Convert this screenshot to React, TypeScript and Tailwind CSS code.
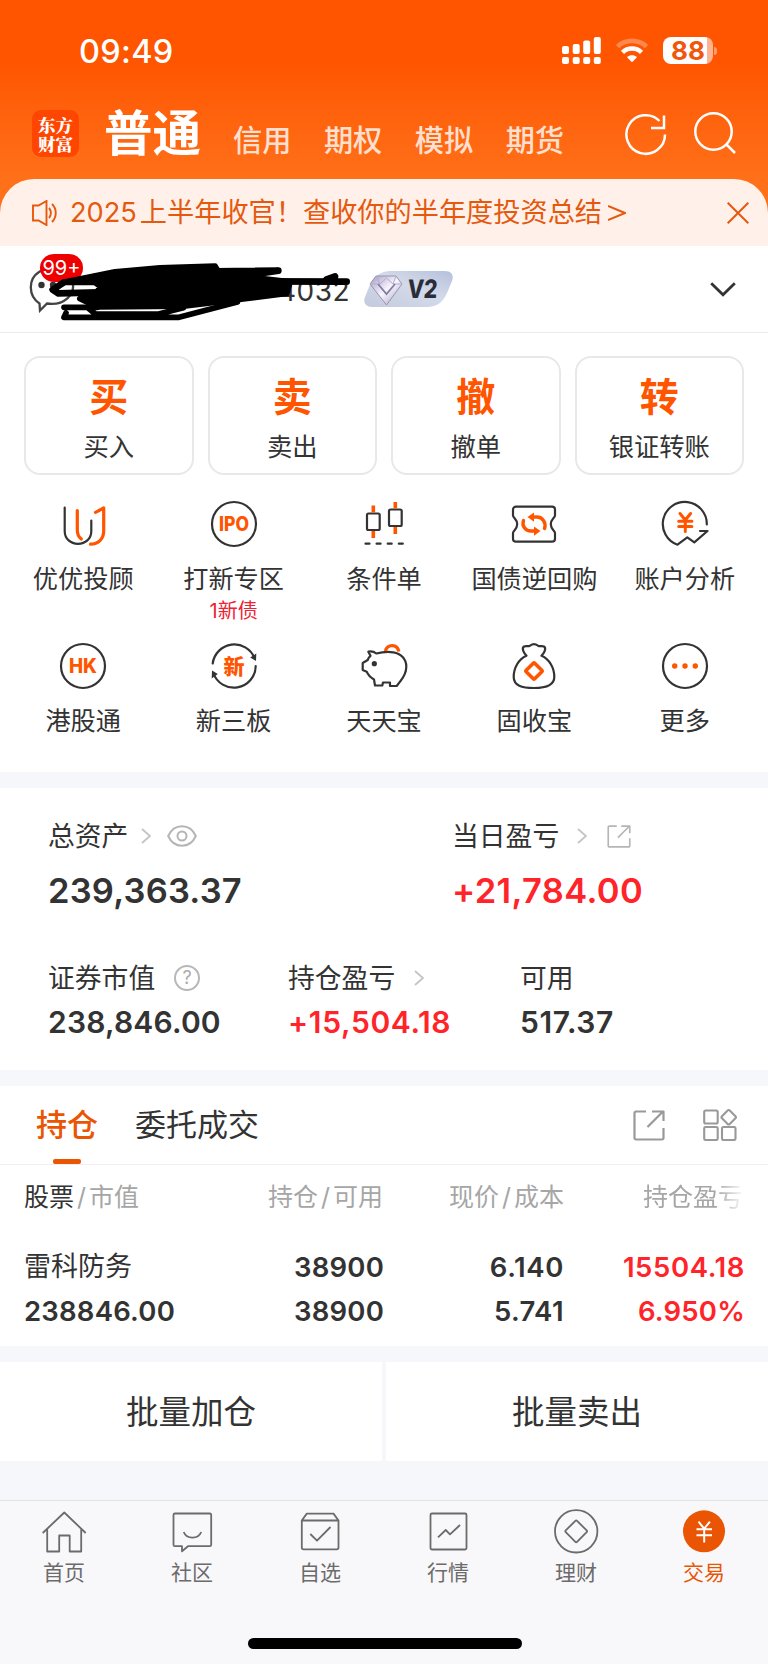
import type { ReactNode } from "react";

const DARK = "#333333";
const ORANGE = "#ff5500";

type Item = { label: string; icon: ReactNode; note?: string };

function Icon48({ children, className = "" }: { children: ReactNode; className?: string }) {
  return (
    <svg
      viewBox="0 0 48 48"
      fill="none"
      stroke={DARK}
      strokeWidth="2.2"
      strokeLinecap="round"
      strokeLinejoin="round"
      className={`h-12 w-12 shrink-0 ${className}`}
    >
      {children}
    </svg>
  );
}

const services: Item[] = [
  {
    label: "优优投顾",
    icon: (
      <Icon48>
        <path d="M5.7 7.5V31c0 8 6 12.8 13.3 12.8S32.3 39 32.3 31V20.5" />
        <g stroke={ORANGE} strokeWidth="3.2">
          <path d="M18.3 10.5V30c0 4.5 1.3 7 4 9" />
          <path d="M36.5 12.3l8.2-4.3V31c0 8-5.5 13-13.2 13.2" />
        </g>
      </Icon48>
    ),
  },
  {
    label: "打新专区",
    note: "1新债",
    icon: (
      <Icon48>
        <circle cx="24" cy="24" r="22" />
        <text x="24" y="31" textAnchor="middle" fontSize="19.5" fontWeight="800" fill={ORANGE} stroke="none" textLength="30" lengthAdjust="spacingAndGlyphs">
          IPO
        </text>
      </Icon48>
    ),
  },
  {
    label: "条件单",
    icon: (
      <Icon48>
        <rect x="7" y="13.5" width="12.7" height="16.5" rx="1.5" />
        <rect x="29" y="9.5" width="12.7" height="16.5" rx="1.5" />
        <path d="M5.5 43.7H44" strokeDasharray="4 7.1" />
        <g stroke={ORANGE} strokeWidth="3.6" strokeLinecap="butt">
          <path d="M13.3 5.5v7M13.3 31v7M35.3 2v6.5M35.3 27v7" />
        </g>
      </Icon48>
    ),
  },
  {
    label: "国债逆回购",
    icon: (
      <Icon48>
        <path d="M6 6.7h36a3 3 0 0 1 3 3v5.8c0 2.2-4.2 3.5-4.2 8.7s4.2 6.5 4.2 8.7v5.8a3 3 0 0 1-3 3H6a3 3 0 0 1-3-3v-5.8c0-2.2 4.2-3.5 4.2-8.7S3 17.7 3 15.5V9.7a3 3 0 0 1 3-3z" />
        <g stroke={ORANGE} strokeWidth="3.4">
          <path d="M13.5 20.5c-2 5.5 2 10.5 7.5 10.5h4" />
          <path d="M34.5 28.5c2-5.5-2-11.5-7.5-11.5h-4" />
        </g>
        <path d="M24 26.5l6.5 4.6-6.5 4.6zM24 12.5l-6.5 4.6 6.5 4.6z" fill={ORANGE} stroke="none" />
      </Icon48>
    ),
  },
  {
    label: "账户分析",
    icon: (
      <Icon48>
        <path d="M45.8 24.5A22 22 0 1 0 16.5 44.7l9.8-7.4 7 5L46.5 31h-7.5" />
        <path d="M19 13.5l5.3 6.5 5.3-6.5M24.3 20v11.5M17.7 21.3h13.2M17.7 26.5h13.2" stroke={ORANGE} strokeWidth="3" />
      </Icon48>
    ),
  },
  {
    label: "港股通",
    icon: (
      <Icon48>
        <circle cx="24" cy="24" r="22" />
        <text x="24" y="31" textAnchor="middle" fontSize="19.5" fontWeight="800" fill={ORANGE} stroke="none" textLength="28" lengthAdjust="spacingAndGlyphs">
          HK
        </text>
      </Icon48>
    ),
  },
  {
    label: "新三板",
    icon: (
      <Icon48>
        <path d="M2.7 21.5A21.8 21.8 0 0 1 44.5 16M45.7 24A21.8 21.8 0 0 1 3.3 31" />
        <path d="M46.3 11.5l-.3 7.5-5.8-3.5zM1.7 36.5L2 28.5l5.8 3.5z" fill={DARK} stroke="none" />
        <text x="24" y="31.5" textAnchor="middle" fontSize="21" fontWeight="800" fill={ORANGE} stroke="none">
          新
        </text>
      </Icon48>
    ),
  },
  {
    label: "天天宝",
    icon: (
      <Icon48>
        <path d="M8.3 9.7c3-.6 6 .2 8 1.8 5-1.3 11-2 17-1.2C41 11.5 46.3 17 46.3 24.7c0 6-3.300 11.3-6.300 15L36.700 44H30v-3.500h-7l-.7 3H15l-1-6C10.5 35.5 8 33 6.7 29.7L2.7 28v-7l5-3c.3-1.7 1.3-3 2.8-4.2z" />
        <circle cx="14.3" cy="21.7" r="2.6" fill={DARK} stroke="none" />
        <path d="M25.5 9c1.5-7.5 12-7 13.3.5" stroke={ORANGE} strokeWidth="3.4" strokeLinecap="butt" />
      </Icon48>
    ),
  },
  {
    label: "固收宝",
    icon: (
      <Icon48>
        <path d="M16.5 13.7c-2.5-2-5.3-7.5-2.5-9.2 2-1 4 .2 6-.8 1.5-1 2.5-1.5 4-1.5s2.5.5 4 1.5c2 1 4-.2 6 .8 2.8 1.7 0 7.2-2.5 9.2C39.5 17 44.3 26 44.3 35c0 8.5-8 11-20.3 11S3.7 43.5 3.7 35c0-9 4.8-18 12.8-21.3z" />
        <rect x="18" y="23" width="12" height="12" rx="1" transform="rotate(45 24 29)" stroke={ORANGE} strokeWidth="3.6" />
      </Icon48>
    ),
  },
  {
    label: "更多",
    icon: (
      <Icon48>
        <circle cx="24" cy="24" r="22" />
        <g fill={ORANGE} stroke="none">
          <circle cx="13.7" cy="24" r="2.7" />
          <circle cx="24" cy="24" r="2.7" />
          <circle cx="34.3" cy="24" r="2.7" />
        </g>
      </Icon48>
    ),
  },
];

const navItems: Item[] = [
  {
    label: "首页",
    icon: <path d="M2.7 25L24.3 4.5 45.7 25M7.2 21.5v22h12v-16h10.5v16h11.5v-22" />,
  },
  {
    label: "社区",
    icon: <path d="M7 5.5h34.7a1.5 1.5 0 0 1 1.5 1.5v29.7a1.5 1.5 0 0 1-1.5 1.5H20L14 43.3v-5.1H7a1.5 1.5 0 0 1-1.5-1.5V7A1.5 1.5 0 0 1 7 5.5zM15.7 24c3 7.500 14.500 7.500 17.500 0" />,
  },
  {
    label: "自选",
    icon: <path d="M5.8 12.5h36.7v27a1.8 1.8 0 0 1-1.8 1.8H7.6a1.8 1.8 0 0 1-1.8-1.8zl5-6.900h26.700l5 6.900M14.300 26l6.700 6.700L34.500 19" />,
  },
  {
    label: "行情",
    icon: <path d="M8 5.5h33a1.5 1.5 0 0 1 1.5 1.5v33a1.5 1.5 0 0 1-1.5 1.5H8A1.5 1.5 0 0 1 6.5 40V7A1.5 1.5 0 0 1 8 5.5zM14 29.3l7.700-7.300 4.300 4.300L36 17" />,
  },
  {
    label: "理财",
    icon: (
      <>
        <circle cx="24.2" cy="23.3" r="21.2" />
        <rect x="16.2" y="15.3" width="16" height="16" rx="1.2" transform="rotate(45 24.2 23.3)" />
      </>
    ),
  },
  {
    label: "交易",
    icon: (
      <>
        <circle cx="24" cy="23.3" r="21" fill="#ea5504" stroke="none" />
        <path d="M18.5 13.7l5.7 7 5.7-7M24.2 21v13.5M16.5 21.3h15.5M16.5 27.3h15.5" stroke="#fff" strokeWidth="2" />
      </>
    ),
  },
];

const trades = [
  ["买", "买入"],
  ["卖", "卖出"],
  ["撤", "撤单"],
  ["转", "银证转账"],
];

function Chevron({ className = "" }: { className?: string }) {
  return (
    <svg viewBox="0 0 10 16" fill="none" stroke="#c4c4c4" strokeWidth="1.8" className={`h-4 w-2.5 ${className}`}>
      <path d="M1 1l8 7-8 7" />
    </svg>
  );
}

function StatusBar() {
  return (
    <div className="flex h-[100px] items-start pt-[33px] pr-[51px] pl-[79px]">
      <span className="pt-px text-[32.5px] leading-9 font-medium tracking-[0.3px]">09:49</span>
      <div className="ml-auto flex pt-1">
        <svg viewBox="0 0 39 27" className="h-[27px] w-[39px]" fill="#fff">
          <rect x="0" y="9" width="7" height="8" rx="2" />
          <rect x="10.7" y="7" width="7" height="10" rx="2" />
          <rect x="21.2" y="3.5" width="7" height="13.5" rx="2" />
          <rect x="31.8" y="0" width="7" height="17" rx="2" />
          <rect x="0" y="20" width="7" height="7" rx="2" />
          <rect x="10.7" y="20" width="7" height="7" rx="2" />
          <rect x="21.2" y="20" width="7" height="7" rx="2" />
          <rect x="31.8" y="20" width="7" height="7" rx="2" />
        </svg>
        <svg viewBox="0 0 32 25" className="ml-[15px] h-[25px] w-8" fill="none" stroke="#fff" strokeWidth="4.6">
          <path d="M1.5 9.5C9.5 2 22.5 2 30.5 9.5" opacity="0.3" />
          <path d="M6.5 15.3c5.3-5 13.7-5 19 0" />
          <path d="M16 25.3l-5-5c2.8-2.6 7.2-2.6 10 0z" fill="#fff" stroke="none" />
        </svg>
        <div className="ml-[15px] flex items-center">
          <div className="flex h-[27px] w-[50px] items-center justify-center rounded-[8px] bg-linear-to-r from-white from-88% to-[#ffb491] to-88% text-[26px] leading-none font-bold text-[#f0570d]">
            88
          </div>
          <div className="ml-px h-2 w-[3px] rounded-r-full bg-[#ff9a6b]" />
        </div>
      </div>
    </div>
  );
}

function Header() {
  return (
    <header className="h-[246px] bg-linear-to-b from-[#ff5500] from-25% to-[#ff7119] to-75% text-white">
      <StatusBar />
      <div className="flex h-[79px] items-start pl-8">
        <div className="mt-[10px] flex h-[47px] w-[47px] items-center justify-center rounded-[9px] bg-[#ff4600] font-['Noto_Serif_CJK_SC','Noto_Sans_CJK_SC',serif] text-[17.5px] leading-[19px] font-black">
          <p className="w-[35px] break-all">东方财富</p>
        </div>
        <h1 className="ml-[25px] text-[48.5px] leading-[68px] font-bold">普通</h1>
        <nav className="mt-[22px] ml-8 flex gap-[32.5px] text-[29.2px] leading-[38px] font-medium text-[#ffe0d0]">
          <span>信用</span>
          <span>期权</span>
          <span>模拟</span>
          <span>期货</span>
        </nav>
        <svg viewBox="0 0 44 44" className="mt-3 ml-[60px] h-11 w-11" fill="none" stroke="#fff" strokeWidth="2.5">
          <path d="M41 22.5A19.3 19.3 0 1 1 35.5 9M40 3.5V16H27" />
        </svg>
        <svg viewBox="0 0 44 44" className="mt-3 ml-[25px] h-11 w-11" fill="none" stroke="#fff" strokeWidth="2.5">
          <circle cx="20.5" cy="19.5" r="18.2" />
          <path d="M33 32l9 9" />
        </svg>
      </div>
      <div className="flex h-[67px] items-center rounded-t-[34px] bg-[#fff1ea] pr-[19px] pl-8 text-[#e5590f]">
        <svg viewBox="0 0 26 26" className="h-[26px] w-[26px]" fill="none" stroke="currentColor" strokeWidth="1.9">
          <path d="M1 5.5h5.5L14.5 1v24l-8-4.5H1zM17 8c2.5 2.5 2.5 7.5 0 10M20 4c5 5 5 13 0 18" />
        </svg>
        <p className="ml-3 text-[27.2px] leading-10 whitespace-nowrap">
          <span className="mr-[3px]">2025</span>上半年收官！查收你的半年度投资总结
        </p>
        <svg viewBox="0 0 18 16" className="ml-1.5 h-4 w-[18px]" fill="none" stroke="currentColor" strokeWidth="2">
          <path d="M0 1l17 7-17 7" />
        </svg>
        <svg viewBox="0 0 22 22" className="ml-auto h-[22px] w-[22px]" fill="none" stroke="currentColor" strokeWidth="2">
          <path d="M.7.7l20.6 20.6M21.3.7L.7 21.3" />
        </svg>
      </div>
    </header>
  );
}

function Account() {
  return (
    <section className="relative flex h-[87px] items-center border-b border-[#ebebed] pr-8 pl-[29px]">
      <svg viewBox="0 0 48 48" className="h-12 w-12" fill="none" stroke="#444" strokeWidth="2.3">
        <path d="M10.5 38.5C-1 31-1 14 10 7 20 0 38 2 43 15c5 15-9 26-25 23.5l-7 7z" />
        <circle cx="12.5" cy="20" r="3.2" fill={DARK} stroke="none" />
        <circle cx="24" cy="20" r="3.2" fill={DARK} stroke="none" />
      </svg>
      <span className="ml-auto pt-1 text-[28px] leading-9 tracking-[0.5px] text-[#333]">4032</span>
      <svg viewBox="0 0 90 36" className="mr-[256px] ml-[14px] h-9 w-[90px]">
        <defs>
          <linearGradient id="plate" x1="0" y1="1" x2="1" y2="0">
            <stop offset="0" stopColor="#c3cade" />
            <stop offset="0.55" stopColor="#d3dae9" />
            <stop offset="1" stopColor="#b6c0db" />
          </linearGradient>
          <linearGradient id="gem" x1="0" y1="0" x2="1" y2="1">
            <stop offset="0" stopColor="#a49cc0" />
            <stop offset="0.5" stopColor="#f8f5ff" />
            <stop offset="1" stopColor="#a09ab8" />
          </linearGradient>
        </defs>
        <path d="M27 0h54c7 0 9 5 7 10l-5 12c-4 9-10 14-20 14H8C1 36-1 31 1 26l4-10C9 6 16 0 27 0z" fill="url(#plate)" />
        <path d="M12 5h20l6 8-15.5 21L6 13z" fill="url(#gem)" stroke="#9a93b4" strokeWidth="1" />
        <path d="M12 5l4 8 6.5-6 6.5 6 3-8M6 13h10M29 13h9" fill="none" stroke="#b4adcb" strokeWidth="1" />
        <path d="M14 13l8.5 10L31 13" fill="none" stroke="#847da6" strokeWidth="1.8" />
        <text x="43" y="27" fontSize="25.5" fontWeight="800" fill="#2b2c3a" textLength="30" lengthAdjust="spacingAndGlyphs" transform="skewX(-4) translate(1.8 0)">
          V2
        </text>
      </svg>
      <svg viewBox="0 0 26 15" className="h-[15px] w-[26px]" fill="none" stroke={DARK} strokeWidth="2.8">
        <path d="M1.2 1.2L13 12.8 24.8 1.2" />
      </svg>
      <span className="absolute top-2 left-10 flex h-7 w-[43px] items-center justify-center rounded-full bg-[#ee0000] text-[20px] leading-none text-white">
        99+
      </span>
      {/* marker strokes over the account number */}
      <svg
        viewBox="0 0 1152 258"
        className="absolute top-0 left-0 h-[86px] w-[384px]"
        fill="none"
        stroke="#000"
        strokeWidth="18"
        strokeLinecap="round"
        strokeLinejoin="round"
      >
        <path d="M190 109L345 78 480 66 645 61 655 78 700 88 870 108 860 142 730 158 700 162 550 180 290 182 240 158 290 145 300 120 285 109z" fill="#000" />
        <path d="M645 76L835 74 700 95 760 106 1040 107M980 100l25-9" strokeWidth="20" />
        <path d="M190 110L158 131 175 142 295 139" strokeWidth="20" />
        <path d="M192 184h100M192 214h345L712 168M192 214l6-13M262 184l24 20h190l74-19" strokeWidth="17" />
      </svg>
    </section>
  );
}

function Services() {
  return (
    <section className="h-[439px] pt-[23px]">
      <div className="grid grid-cols-4 gap-[14px] px-6">
        {trades.map(([mark, name]) => (
          <button key={mark} className="flex h-[119px] flex-col items-center rounded-[16px] border-2 border-[#e8e8ea] pt-3">
            <span className="text-[39px] leading-[54px] font-bold text-[#ff5500]">{mark}</span>
            <span className="mt-[7px] text-[25.3px] leading-8">{name}</span>
          </button>
        ))}
      </div>
      <div className="mt-[25px] grid grid-cols-5 px-2">
        {services.map((item) => (
          <div key={item.label} className="flex h-[142px] flex-col items-center">
            {item.icon}
            <span className="mt-[13px] text-[25.2px] leading-9">{item.label}</span>
            {item.note && <span className="mt-0.5 text-[20px] leading-6 text-[#ee2233]">{item.note}</span>}
          </div>
        ))}
      </div>
    </section>
  );
}

function ShareIcon({ className = "" }: { className?: string }) {
  return (
    <svg viewBox="0 0 32 31" fill="none" stroke="currentColor" strokeWidth="2.2" strokeLinejoin="round" className={className}>
      <path d="M13 1.5H3a1.5 1.5 0 0 0-1.5 1.5v25A1.5 1.5 0 0 0 3 29.5h26a1.5 1.5 0 0 0 1.5-1.5V18M14.5 17L29.5 2M19 1.5h11.5V11" />
    </svg>
  );
}

function Assets() {
  return (
    <section className="mt-4 h-[282px] bg-white pt-7 pl-12">
      <div className="flex">
        <div className="w-[404px]">
          <div className="flex h-10 items-center">
            <span className="text-[26.8px] leading-10">总资产</span>
            <Chevron className="ml-[13px]" />
            <svg viewBox="0 0 30 22" className="ml-4 h-[22px] w-[30px]" fill="none" stroke="#b5b5b5" strokeWidth="2">
              <path d="M1.2 11C7-2 23-2 28.8 11 23 24 7 24 1.2 11z" />
              <circle cx="15" cy="11" r="4.5" />
            </svg>
          </div>
          <p className="mt-[15px] text-[34.5px] leading-10 font-semibold tracking-[0.2px]">239,363.37</p>
        </div>
        <div>
          <div className="flex h-10 items-center">
            <span className="text-[26.8px] leading-10">当日盈亏</span>
            <Chevron className="ml-[18px]" />
            <ShareIcon className="ml-5 h-[23px] w-6 text-[#b5b5b5]" />
          </div>
          <p className="mt-[15px] text-[34.5px] leading-10 font-semibold tracking-[0.35px] text-[#ff2429]">+21,784.00</p>
        </div>
      </div>
      <div className="mt-[47px] flex">
        <div className="w-60">
          <div className="flex h-10 items-center">
            <span className="text-[26.8px] leading-10">证券市值</span>
            <span className="ml-[19px] flex h-[26px] w-[26px] items-center justify-center rounded-full border-2 border-[#b8b8b8] text-[18px] leading-none text-[#aaa]">
              ?
            </span>
          </div>
          <p className="mt-1 text-[30px] leading-10 font-semibold tracking-[0.2px]">238,846.00</p>
        </div>
        <div className="w-[232px]">
          <div className="flex h-10 items-center">
            <span className="text-[26.8px] leading-10">持仓盈亏</span>
            <Chevron className="ml-[19px]" />
          </div>
          <p className="mt-1 text-[30px] leading-10 font-semibold tracking-[0.65px] text-[#ff2429]">+15,504.18</p>
        </div>
        <div>
          <p className="text-[26.8px] leading-10">可用</p>
          <p className="mt-1 text-[30px] leading-10 font-semibold tracking-[0.6px]">517.37</p>
        </div>
      </div>
    </section>
  );
}

function Holdings() {
  return (
    <section className="mt-4 h-[260px] bg-white">
      <div className="flex h-[79px] items-center border-b border-[#efeff1] pr-[31px] pl-9 text-[31px]">
        <div className="relative flex h-full items-center font-medium text-[#ea5504]">
          持仓
          <span className="absolute bottom-0 left-[17px] h-[5px] w-[28px] rounded-[2px] bg-[#ea5504]" />
        </div>
        <span className="ml-[37px]">委托成交</span>
        <ShareIcon className="ml-auto h-[31px] w-8 text-[#999]" />
        <svg viewBox="0 0 34 32" className="ml-[38px] h-8 w-[34px]" fill="none" stroke="#999" strokeWidth="2.1">
          <rect x="1.2" y="1.5" width="13.5" height="13" rx="1.5" />
          <rect x="1.2" y="18" width="13.5" height="13" rx="1.5" />
          <rect x="19" y="18" width="13.5" height="13" rx="1.5" />
          <rect x="20.2" y="2.7" width="11" height="11" rx="1.5" transform="rotate(45 25.7 8.2)" />
        </svg>
      </div>
      <div className="grid grid-cols-[180px_179px_181px_181px] pt-3 pl-6 text-right text-[25px] leading-10 text-[#a6a6a6]">
        <span className="text-left whitespace-nowrap">
          <span className="text-[#333]">股票</span>
          <span className="mx-[3px]">/</span>市值
        </span>
        <span>
          持仓<span className="mx-[3px]">/</span>可用
        </span>
        <span>
          现价<span className="mx-[3px]">/</span>成本
        </span>
        <span className="ml-[79px] overflow-hidden mask-r-from-72% mask-r-to-100% text-left whitespace-nowrap">持仓盈亏</span>
      </div>
      <div className="mt-[28px] grid grid-cols-[180px_180px_180px_181px] pl-6 text-right text-[27.5px] leading-[44px] font-semibold tracking-[0.2px]">
        <span className="text-left text-[27px] font-normal tracking-normal">雷科防务</span>
        <span>38900</span>
        <span className="tracking-[0.6px]">6.140</span>
        <span className="tracking-[0.6px] text-[#ff2429]">15504.18</span>
        <span className="text-left">238846.00</span>
        <span>38900</span>
        <span className="tracking-[0.4px]">5.741</span>
        <span className="text-[#ff2429]">6.950%</span>
      </div>
    </section>
  );
}

function BottomNav() {
  return (
    <nav className="mt-[39px] flex h-[164px] flex-col items-center border-t border-[#e3e4e6] bg-[#f8f8fa]">
      <div className="grid w-full grid-cols-6">
        {navItems.map((item, i) => (
          <div key={item.label} className={`flex flex-col items-center ${i === 5 ? "text-[#ea5504]" : "text-[#6b6b6b]"}`}>
            <svg
              viewBox="0 0 48 48"
              className="mt-[7px] h-12 w-12"
              fill="none"
              stroke="currentColor"
              strokeWidth="1.8"
              strokeLinejoin="round"
            >
              {item.icon}
            </svg>
            <span className="mt-px text-[21px] leading-8">{item.label}</span>
          </div>
        ))}
      </div>
      <div className="mt-[49px] ml-0.5 h-[11px] w-[274px] rounded-full bg-black" />
    </nav>
  );
}

export default function App() {
  return (
    <div className="h-[1664px] w-[768px] overflow-hidden bg-[#f6f7fa] font-['Inter','Noto_Sans_CJK_SC',sans-serif] text-[#333]">
      <Header />
      <div className="bg-white">
        <Account />
        <Services />
      </div>
      <Assets />
      <Holdings />
      <div className="mt-4 grid h-[99px] grid-cols-2 gap-1 text-[32.5px]">
        <button className="bg-white pt-1">批量加仓</button>
        <button className="bg-white pt-1">批量卖出</button>
      </div>
      <BottomNav />
    </div>
  );
}
